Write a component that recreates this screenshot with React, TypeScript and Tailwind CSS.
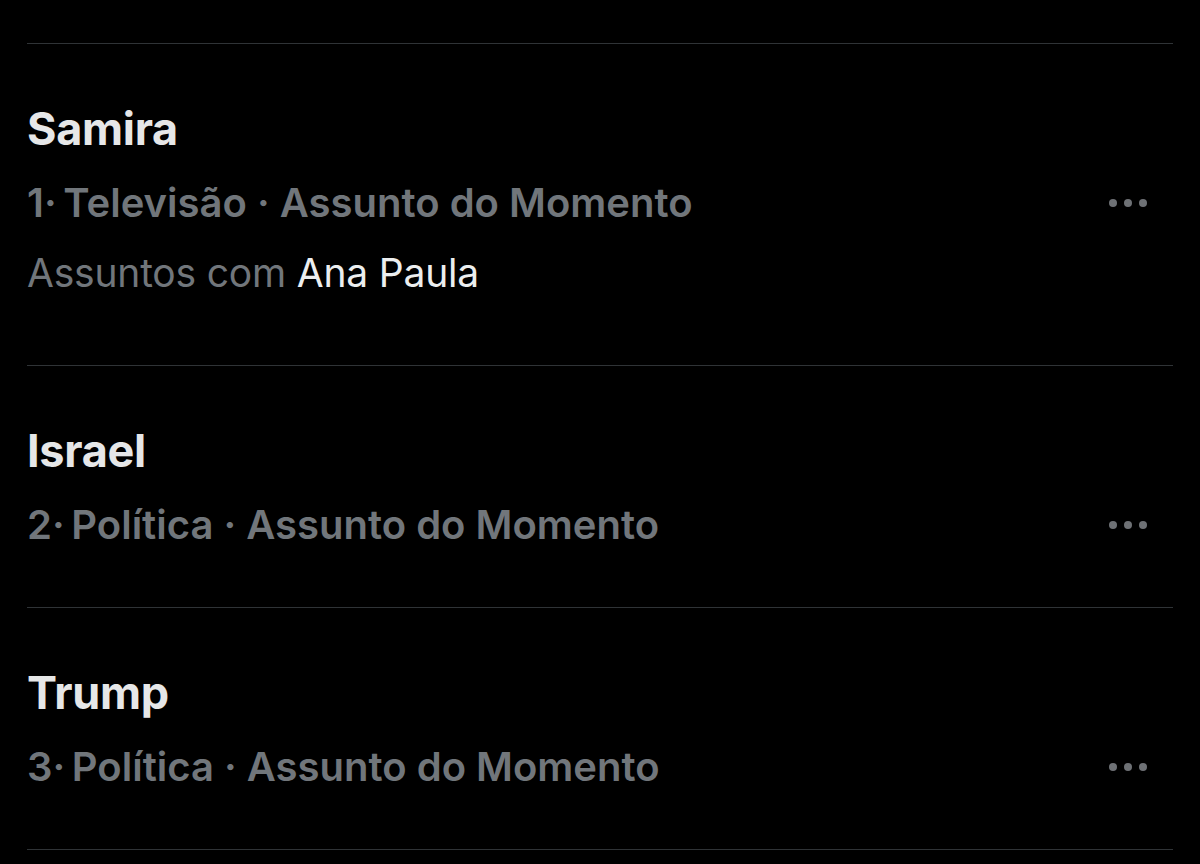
const trends = [
  { title: "Samira", rank: "1", category: "Televisão", related: "Ana Paula" },
  { title: "Israel", rank: "2", category: "Política" },
  { title: "Trump", rank: "3", category: "Política" },
];

function MoreDots() {
  return (
    <div className="flex items-center gap-[7px] pr-[26px]">
      <span className="block h-2 w-2 rounded-full bg-[#6e7175]" />
      <span className="block h-2 w-2 rounded-full bg-[#6e7175]" />
      <span className="block h-2 w-2 rounded-full bg-[#6e7175]" />
    </div>
  );
}

export default function App() {
  return (
    <main className="min-h-[864px] w-full bg-black pt-[43px] font-['Inter',sans-serif]">
      <div className="mx-[27px] border-t border-[#2f3336]">
        {trends.map((t) => (
          <div
            key={t.title}
            className={`border-b border-[#2f3336] pt-[59px] ${t.related ? "pb-[68px]" : "pb-[58px]"}`}
          >
            <h2 className="text-[45px] leading-[52px] font-bold tracking-[-0.3px] text-[#e6e7e8]">
              {t.title}
            </h2>
            <div className="mt-[24px] flex items-center justify-between">
              <p className="text-[40px] leading-[48px] font-semibold text-[#71767b]">
                {t.rank}·&thinsp;{t.category} · Assunto do Momento
              </p>
              <MoreDots />
            </div>
            {t.related && (
              <p className="mt-[22px] text-[39px] leading-[48px] font-normal tracking-[-0.2px] text-[#71767b]">
                Assuntos com <span className="text-[#eceeef]">{t.related}</span>
              </p>
            )}
          </div>
        ))}
      </div>
    </main>
  );
}
